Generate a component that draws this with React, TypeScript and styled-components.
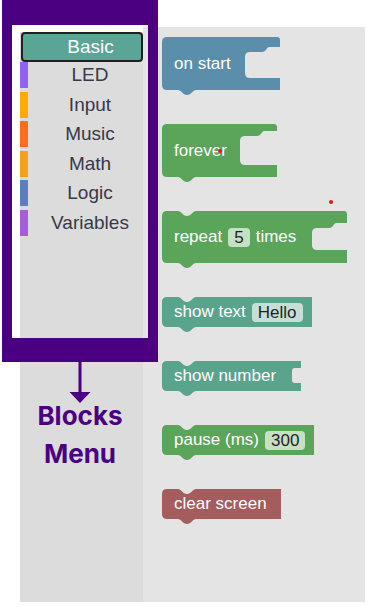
import styled, { createGlobalStyle } from 'styled-components'

const GlobalStyle = createGlobalStyle`
	html, body {
		margin: 0;
		padding: 0;
		background: #ffffff;
	}
	body {
		font-family: 'Liberation Sans', Arial, sans-serif;
	}
`

const Page = styled.div`
	position: relative;
	width: 370px;
	height: 607px;
	overflow: hidden;
	box-sizing: border-box;
	padding: 27px 5px 0 20px;
`

const Editor = styled.div`
	display: flex;
	width: 345px;
	height: 575px;
`

const Toolbox = styled.div`
	width: 123px;
	margin-top: 5px;
	background: #dcdcdc;
	display: flex;
	flex-direction: column;
`

const SelectedCategory = styled.div`
	height: 30px;
	margin-left: 1px;
	box-sizing: border-box;
	border: 2px solid #1f1f1f;
	border-radius: 4px;
	background: #5ba596;
	color: #ffffff;
	font-size: 19px;
	display: flex;
	align-items: center;
	justify-content: center;
	padding-left: 17px;
`

const CategoryList = styled.div`
	display: flex;
	flex-direction: column;
	gap: 3.6px;
`

const Category = styled.div`
	height: 26px;
	display: flex;
	align-items: center;
`

const Swatch = styled.span<{ $color: string }>`
	width: 8px;
	align-self: stretch;
	background: ${(p) => p.$color};
`

const CategoryName = styled.span`
	flex: 1;
	text-align: center;
	padding-left: 9px;
	font-size: 19px;
	color: #383848;
`

const Workspace = styled.div`
	flex: 1;
	background: #e4e4e4;
	display: flex;
	flex-direction: column;
	align-items: flex-start;
	gap: 34px;
	padding: 10px 0 0 19px;
`

const BlockWrap = styled.div<{ $w: number; $h: number }>`
	position: relative;
	width: ${(p) => p.$w}px;
	height: ${(p) => p.$h}px;
`

const BlockShape = styled.svg`
	position: absolute;
	left: 0;
	top: 0;
	overflow: visible;
`

const BlockRow = styled.div`
	position: relative;
	height: 100%;
	display: flex;
	align-items: center;
	gap: 6px;
	padding-left: 12px;
	font-size: 17px;
	color: #ffffff;
	white-space: nowrap;
`

const Field = styled.span`
	height: 19px;
	line-height: 19px;
	padding: 0 6px;
	border-radius: 4px;
	background: rgba(255, 255, 255, 0.65);
	color: #1f1f1f;
`

const Dot = styled.span<{ $x: number; $y: number }>`
	position: absolute;
	left: ${(p) => p.$x - 2}px;
	top: ${(p) => p.$y - 2}px;
	width: 4px;
	height: 4px;
	border-radius: 50%;
	background: #ee1111;
`

const Annotation = styled.div`
	position: absolute;
	left: 2px;
	top: 0;
	width: 156px;
	display: flex;
	flex-direction: column;
	align-items: center;
	pointer-events: none;
`

const Frame = styled.div`
	align-self: stretch;
	height: 362px;
	box-sizing: border-box;
	border-style: solid;
	border-color: #4b0082;
	border-width: 25px 10px 24px 10px;
`

const Arrow = styled.svg`
	display: block;
`

const Label = styled.div`
	margin-top: -6px;
	font-family: Inter, 'Noto Sans', sans-serif;
	font-weight: 700;
	font-size: 26px;
	line-height: 38px;
	color: #4b0082;
	text-align: center;
`

// notch / bump of the puzzle pieces
const N = 16
const topNotch = `H ${N} C ${N + 3} 0 ${N + 5} 5 ${N + 9} 5 C ${N + 13} 5 ${N + 15} 0 ${N + 18} 0`
const bottomBump = (h: number) =>
	`H ${N + 18} C ${N + 15} ${h} ${N + 13} ${h + 5} ${N + 9} ${h + 5} C ${N + 5} ${h + 5} ${N + 3} ${h} ${N} ${h}`

const stackPath = (w: number, h: number, notch: boolean, input: boolean) => {
	const r = 5
	let d = `M 0 ${r} Q 0 0 ${r} 0 `
	if (notch) d += topNotch + ' '
	d += `H ${w} `
	if (input) {
		const y0 = 7
		const y1 = h - 8
		d += `V ${y0} H ${w - 6} Q ${w - 9} ${y0} ${w - 9} ${y0 + 3} V ${y1 - 3} Q ${w - 9} ${y1} ${w - 6} ${y1} H ${w} `
	}
	d += `V ${h} ${bottomBump(h)} H ${r} Q 0 ${h} 0 ${h - r} Z`
	return d
}

const cPath = (w: number, h: number, L: number, T: number, B: number, notch: boolean) => {
	const r = 5
	const inBottom = h - B
	let d = `M 0 ${r} Q 0 0 ${r} 0 `
	if (notch) d += topNotch + ' '
	d += `H ${w - 3} Q ${w} 0 ${w} 3 V ${T} H ${L + 24} C ${L + 22} ${T} ${L + 21} ${T + 5} ${L + 17} ${T + 5} `
	d += `H ${L + r} Q ${L} ${T + 5} ${L} ${T + 5 + r} V ${inBottom - r} Q ${L} ${inBottom} ${L + r} ${inBottom} `
	d += `H ${w} V ${h} ${bottomBump(h)} H ${r} Q 0 ${h} 0 ${h - r} Z`
	return d
}

type BlockProps = {
	color: string
	w: number
	h?: number
	notch?: boolean
	input?: boolean
	mouth?: { L: number; T: number; B: number }
	children: React.ReactNode
	dots?: { x: number; y: number }[]
}

const Block = ({ color, w, h = 30, notch = true, input = false, mouth, children, dots }: BlockProps) => {
	const d = mouth ? cPath(w, h, mouth.L, mouth.T, mouth.B, notch) : stackPath(w, h, notch, input)
	return (
		<BlockWrap $w={w} $h={h}>
			<BlockShape width={w} height={h}>
				<path d={d} fill={color} />
			</BlockShape>
			<BlockRow>{children}</BlockRow>
			{dots?.map((p, i) => <Dot key={i} $x={p.x} $y={p.y} />)}
		</BlockWrap>
	)
}

const categories = [
	{ name: 'LED', color: '#9161f2' },
	{ name: 'Input', color: '#ffab00' },
	{ name: 'Music', color: '#fd6d1c' },
	{ name: 'Math', color: '#f4a21a' },
	{ name: 'Logic', color: '#5b80bd' },
	{ name: 'Variables', color: '#a55ddc' }
]

const App = () => {
	return (
		<Page>
			<GlobalStyle />
			<Editor>
				<Toolbox>
					<SelectedCategory>Basic</SelectedCategory>
					<CategoryList>
						{categories.map((c) => (
							<Category key={c.name}>
								<Swatch $color={c.color} />
								<CategoryName>{c.name}</CategoryName>
							</Category>
						))}
					</CategoryList>
				</Toolbox>
				<Workspace>
					<Block color='#5a8eab' w={118} h={53} notch={false} mouth={{ L: 83, T: 10, B: 12 }}>
						on start
					</Block>
					<Block
						color='#5ba55b'
						w={115}
						h={53}
						notch={false}
						mouth={{ L: 78, T: 7, B: 12 }}
						dots={[{ x: 58, y: 27 }]}
					>
						forever
					</Block>
					<Block color='#5ba55b' w={185} h={52} mouth={{ L: 150, T: 12, B: 13 }} dots={[{ x: 169, y: -9 }]}>
						repeat <Field>5</Field> times
					</Block>
					<Block color='#5aa38c' w={150}>
						show text <Field>Hello</Field>
					</Block>
					<Block color='#5aa38c' w={139} input>
						show number
					</Block>
					<Block color='#5ba55b' w={152}>
						pause (ms) <Field>300</Field>
					</Block>
					<Block color='#a55c5c' w={119}>
						clear screen
					</Block>
				</Workspace>
			</Editor>
			<Annotation>
				<Frame />
				<Arrow width={22} height={41} viewBox='0 0 22 41'>
					<line x1={11} y1={0} x2={11} y2={32} stroke='#4b0082' strokeWidth={3} />
					<polygon points='0.5,30 21.5,30 11,41' fill='#4b0082' />
				</Arrow>
				<Label>
					Blocks
					<br />
					Menu
				</Label>
			</Annotation>
		</Page>
	)
}

export default App
